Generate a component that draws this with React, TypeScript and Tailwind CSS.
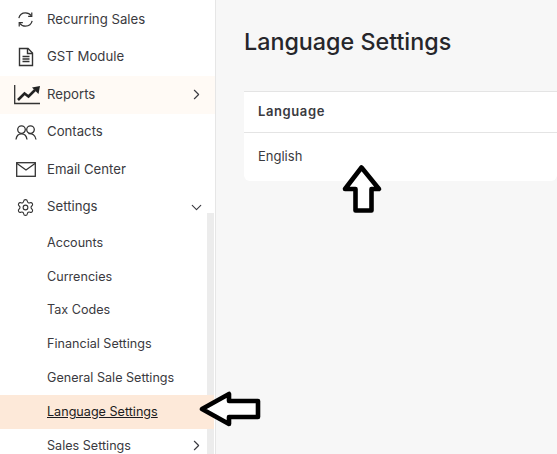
import React from "react";
import { ChevronDown, ChevronRight, Settings } from "lucide-react";

const Repeat = () => (
  <svg viewBox="0 0 20 20" className="h-[19px] w-[19px]" fill="none" stroke="#333" strokeWidth="1.3">
    <path d="M3 8.5C3.8 5 6.5 3 10 3c2.6 0 4.6 1 6 3" />
    <path d="M16.6 2.6V6.6H12.8" />
    <path d="M17 11.5C16.2 15 13.5 17 10 17c-2.6 0-4.6-1-6-3" />
    <path d="M3.4 17.4V13.4H7.2" />
  </svg>
);

const Doc = () => (
  <svg viewBox="0 0 20 20" className="h-5 w-5" fill="none" stroke="#333" strokeWidth="1.4">
    <path d="M3.5 1.5H12L16.5 6V18.5H3.5Z" />
    <path d="M11.5 1.5V6.5H16.5" />
    <path d="M6.5 9.5H13.5M6.5 12H13.5M6.5 14.5H13.5" />
  </svg>
);

const Chart = () => (
  <svg viewBox="0 0 27 20" className="ml-[3px] h-5 w-[27px]" fill="none">
    <path d="M0.7 0V18.5H26" stroke="#333" strokeWidth="1.3" />
    <path d="M4 15L10.5 8.5L14.5 11.5L21 5" stroke="#222" strokeWidth="2.6" />
    <path d="M18 2.5L26 1L24.5 9Z" fill="#222" />
  </svg>
);

const People = () => (
  <svg viewBox="0 0 22 15" className="h-[15px] w-[22px]" fill="none" stroke="#333" strokeWidth="1.3">
    <circle cx="6.5" cy="4.6" r="3.8" />
    <path d="M1 14.5C1.5 10.5 4 8.8 6.5 8.8S11.5 10.5 12 14.5" />
    <circle cx="15.5" cy="4.6" r="3.8" />
    <path d="M13.5 8.6C17 8.2 20.5 10 21 14.5" />
  </svg>
);

const Envelope = () => (
  <svg viewBox="0 0 20 15" className="h-[15px] w-5" fill="none" stroke="#333" strokeWidth="1.3">
    <rect x="0.7" y="0.7" width="18.6" height="13.6" />
    <path d="M1 1.5L10 8L19 1.5" />
  </svg>
);

const topItems = [
  { label: "Recurring Sales", icon: <Repeat /> },
  { label: "GST Module", icon: <Doc /> },
  { label: "Reports", icon: <Chart />, active: true, arrow: true },
  { label: "Contacts", icon: <People /> },
  { label: "Email Center", icon: <Envelope /> },
  { label: "Settings", icon: <Settings className="h-[19px] w-[19px]" strokeWidth={1.4} color="#333" />, open: true },
];

const subItems = ["Accounts", "Currencies", "Tax Codes", "Financial Settings", "General Sale Settings"];

export default function App() {
  return (
    <div className="relative flex h-[454px] w-[557px] overflow-hidden bg-[#f7f7f7] text-[13px] text-[#3a3a40] font-['Inter',sans-serif]">
      <aside className="relative w-[216px] shrink-0 border-r border-[#e6e6e6] bg-white pt-[1px]">
        {topItems.map((item) => (
          <div
            key={item.label}
            className={
              item.active
                ? "flex h-[37.5px] items-center bg-[#fffaf5] pr-[10px]"
                : "flex h-[37.5px] items-center pr-[10px]"
            }
          >
            <span className="flex w-[47px] justify-center pl-[4px]">{item.icon}</span>
            <span className="flex-1 text-[13.2px]">{item.label}</span>
            {item.arrow && <ChevronRight className="h-[17px] w-[17px]" strokeWidth={1.6} />}
            {item.open && <ChevronDown className="h-[17px] w-[17px]" strokeWidth={1.6} />}
          </div>
        ))}
        <div className="h-[0.5px]" />
        {subItems.map((label) => (
          <div key={label} className="flex h-[33.7px] items-center pl-[47px] text-[12.6px]">
            {label}
          </div>
        ))}
        <div className="relative z-10 mr-[1px] flex h-[33.7px] items-center bg-[#fde9d9] pl-[47px] pt-[1px] text-[12.6px] text-[#1c1c20] underline">
          Language Settings
        </div>
        <div className="mt-[0.5px] flex h-[33.7px] items-center pl-[47px] pr-[10px] text-[12.6px]">
          <span className="flex-1">Sales Settings</span>
          <ChevronRight className="h-[17px] w-[17px]" strokeWidth={1.6} />
        </div>
        <div className="absolute right-[1px] top-[213px] bottom-0 w-[7px] bg-[#ececec]" />
      </aside>

      <main className="flex-1 pl-[28px] pt-[27px]">
        <h1 className="text-[23.3px] font-medium leading-[29px] text-[#26262b]">Language Settings</h1>
        <div className="mt-[35px] rounded-b-md border-t border-[#e4e4e4] bg-white">
          <div className="flex h-[41px] items-center border-b border-[#e4e4e4] pl-[14px] font-semibold tracking-[0.6px]">
            Language
          </div>
          <div className="flex h-[48px] items-center pl-[14px]">English</div>
        </div>
      </main>

      {/* arrows drawn over the screenshot */}
      <svg viewBox="0 0 75 50" className="absolute left-[195px] top-[385px] z-20 h-[50px] w-[75px]" fill="white" stroke="black" strokeWidth="4.6" strokeLinejoin="round">
        <path d="M7 24L34 9V16H63V32H34V39Z" />
      </svg>
      <svg viewBox="0 0 55 60" className="absolute left-[335px] top-[160px] z-20 h-[60px] w-[55px]" fill="white" stroke="black" strokeWidth="4.6" strokeLinejoin="round">
        <path d="M26.5 7.5L44 29H36.5V50.5H20.5V29H10Z" />
      </svg>
    </div>
  );
}
